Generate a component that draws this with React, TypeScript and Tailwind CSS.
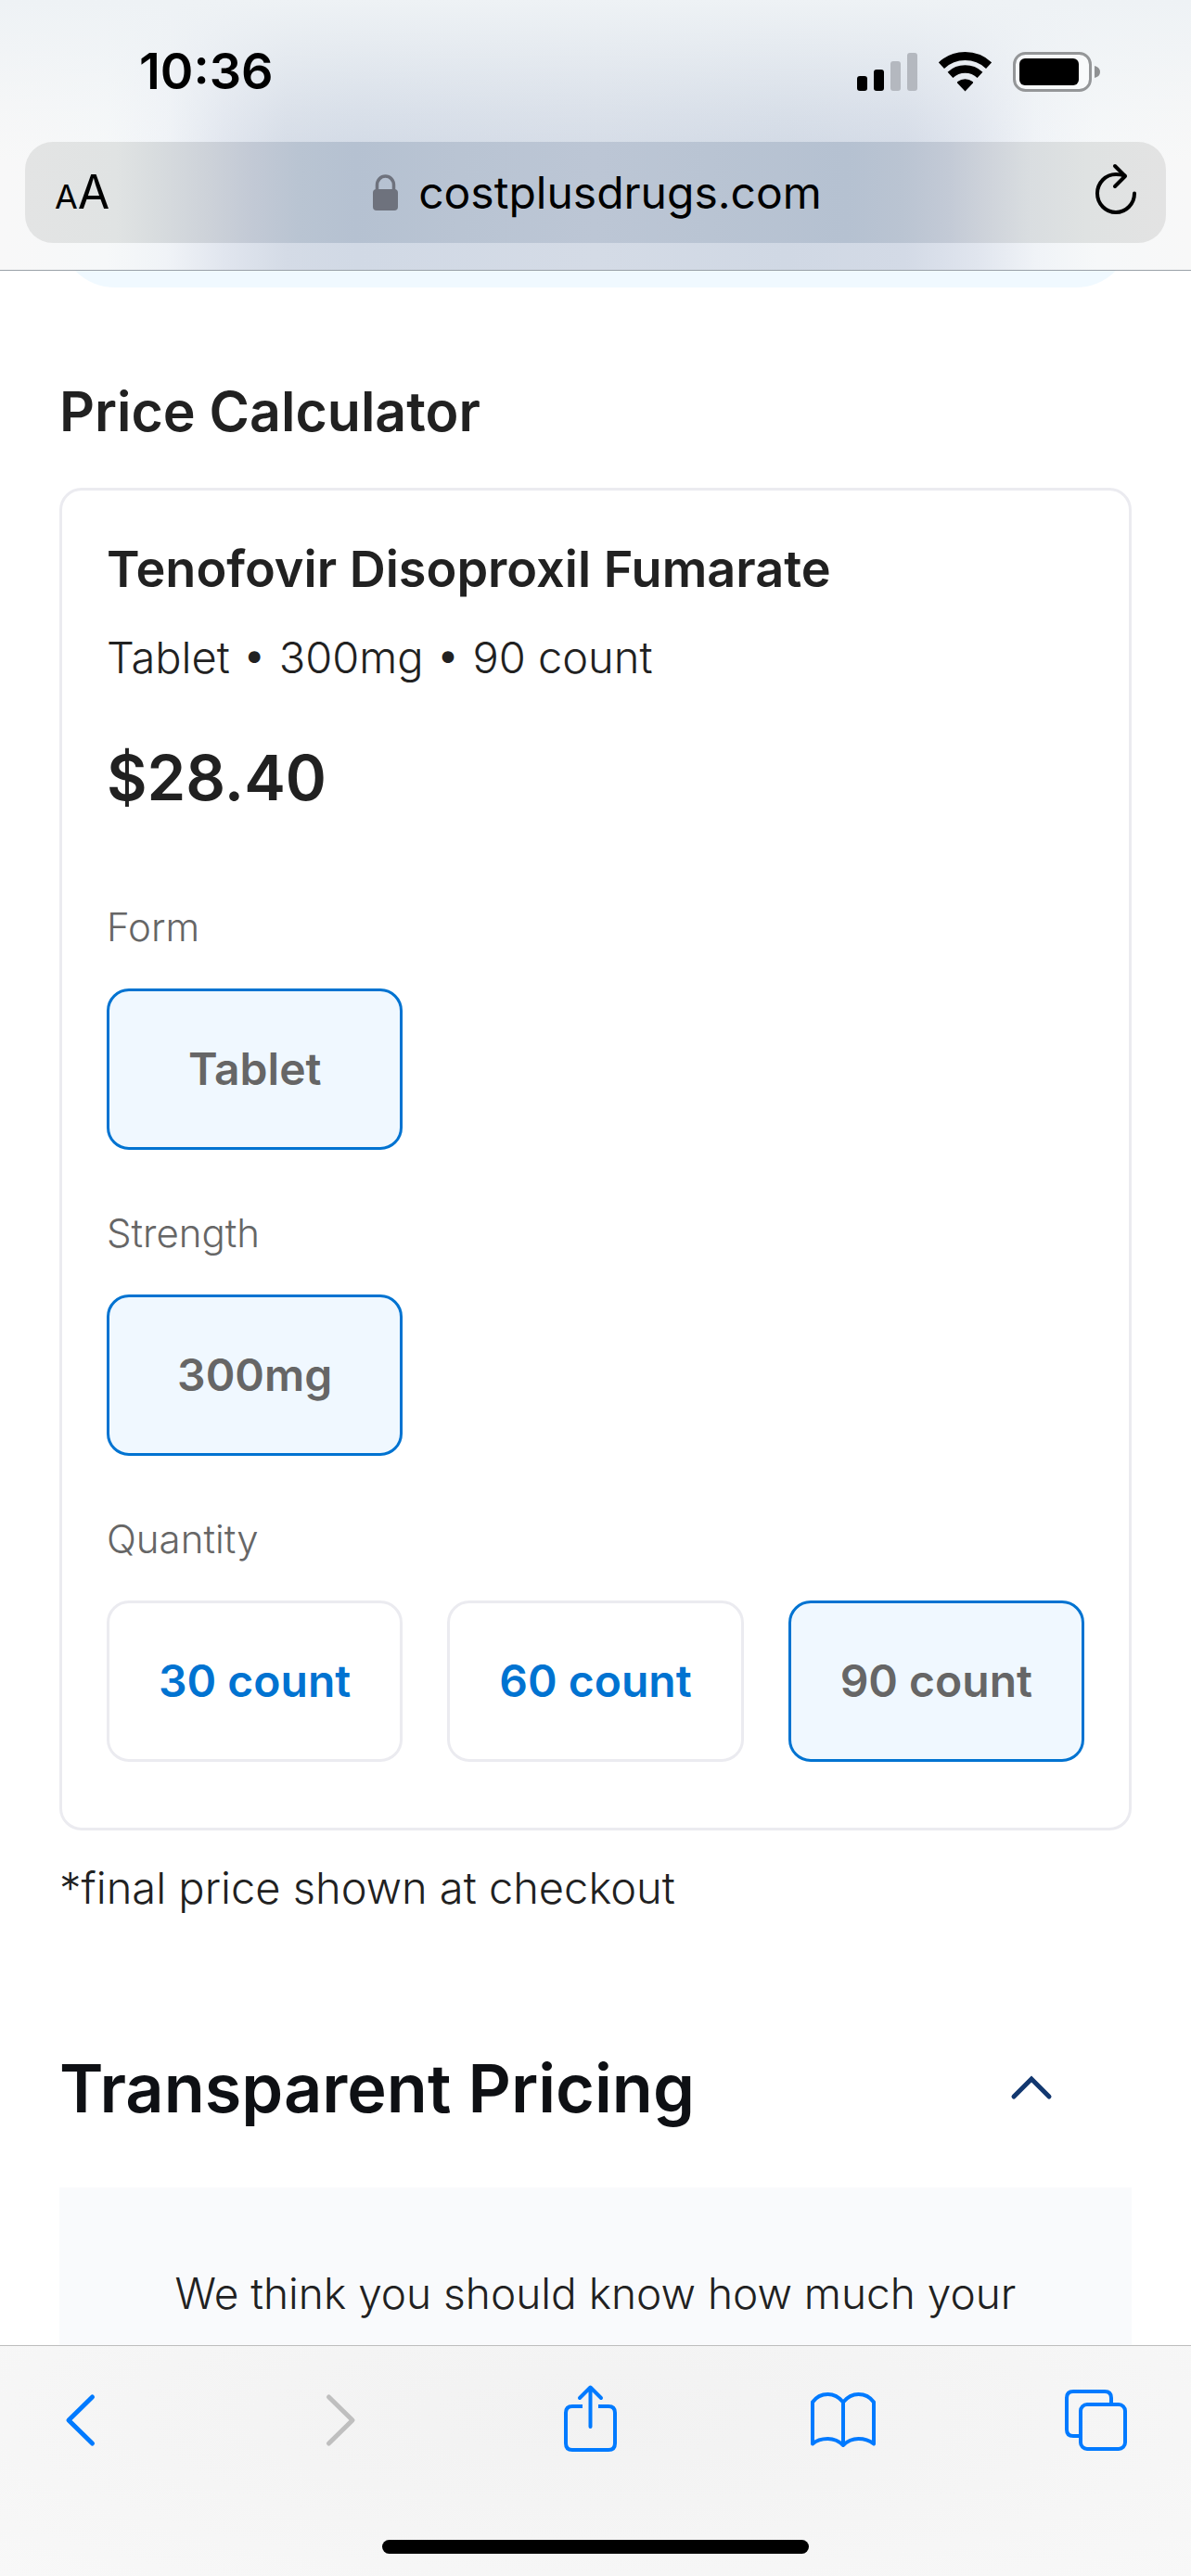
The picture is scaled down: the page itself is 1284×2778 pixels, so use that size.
import { useState } from "react";

const optionGroups = [
  { id: "form", label: "Form", options: ["Tablet"] },
  { id: "strength", label: "Strength", options: ["300mg"] },
  { id: "quantity", label: "Quantity", options: ["30 count", "60 count", "90 count"] },
];

const prices: Record<string, string> = {
  "30 count": "$13.80",
  "60 count": "$21.10",
  "90 count": "$28.40",
};

function StatusBar() {
  return (
    <div className="flex items-center justify-between pt-[44px] pl-[150px] pr-[97px]">
      <span className="text-[54px] leading-[66px] font-semibold">10:36</span>
      <div className="flex items-center gap-[23px]">
        <svg className="w-[65px] h-[43px]" viewBox="0 0 65 43" aria-label="Signal">
          <rect x="0" y="26" width="11" height="16" rx="3" />
          <rect x="18" y="19" width="11" height="23" rx="3" />
          <rect x="36" y="10" width="11" height="32" rx="3" fill="#b4b8bf" />
          <rect x="54" y="1" width="11" height="41" rx="3" fill="#b4b8bf" />
        </svg>
        <svg className="w-[57px] h-[43px]" viewBox="0 0 57 43" aria-label="Wi-Fi">
          <g fill="none" stroke="#000">
            <path d="M2.9 14.6A37.5 37.5 0 0 1 54.1 14.6" strokeWidth="9" />
            <path d="M12.5 24.8A23.5 23.5 0 0 1 44.5 24.8" strokeWidth="8.5" />
          </g>
          <path d="M28.5 42.4L20 33.4Q19.6 32.6 20.4 32A13 13 0 0 1 36.6 32Q37.4 32.6 37 33.4Z" />
        </svg>
        <svg className="w-[95px] h-[43px]" viewBox="0 0 95 43" aria-label="Battery">
          <rect x="1.5" y="1.5" width="82" height="40" rx="12" fill="#fff" fillOpacity="0.5" stroke="#949698" strokeWidth="3" />
          <rect x="7" y="7" width="64" height="29" rx="6" />
          <path d="M88 15Q94 16.500 94 21.500T88 28Z" fill="#8f9193" />
        </svg>
      </div>
    </div>
  );
}

function AddressBar() {
  return (
    <div className="mx-[27px] mt-[43px] mb-[29px] h-[109px] px-8 rounded-[30px] flex items-center justify-between bg-[linear-gradient(90deg,#e3e4e4_0%,#e0e3e3_8%,#d9dddf_11%,#cdd2d9_16%,#c2c9d5_20%,#b9c4d2_24%,#b5c1d1_29%,#b9c4d3_38%,#bcc6d5_50%,#b9c4d3_60%,#b5c1d1_72%,#bac4d2_77%,#c3cad6_81%,#cdd2da_84%,#d9dde0_88%,#dfe2e2_93%,#e3e3e3_100%)]">
      <button className="w-[60px] pt-1 flex items-baseline text-[50px] leading-[60px]" aria-label="Page settings">
        <span className="text-[36px]">A</span>
        <span>A</span>
      </button>
      <button className="pl-1 flex items-center gap-[22px] text-[48px] leading-[60px]">
        <svg className="w-[27px] h-[40px]" viewBox="0 0 27 40" fill="#6e727d">
          <rect x="0" y="16" width="27" height="23" rx="4" />
          <path d="M4.500 18V11.500a9 9.500 0 0 1 18 0V18" fill="none" stroke="#6e727d" strokeWidth="3.500" />
        </svg>
        costplusdrugs.com
      </button>
      <button className="w-[60px] flex justify-end" aria-label="Reload">
        <svg className="w-[44px] h-[56px] mb-2" viewBox="0 0 44 56" fill="none" stroke="#000" strokeWidth="4" strokeLinecap="round" strokeLinejoin="round">
          <path d="M31.500 13.500Q27 12 22 12A20 20.500 0 1 0 42 32.500" />
          <path d="M21 3L32 14L21 25" />
        </svg>
      </button>
    </div>
  );
}

function BrowserHeader() {
  return (
    <header className="shrink-0 border-b border-[#9aa1a8] bg-[linear-gradient(180deg,#eef2f5_0%,#eef2f5aa_20%,#eef2f544_42%,#eef2f500_60%),linear-gradient(90deg,#f8f8f8_0%,#f6f8f9_9%,#f0f3f7_14%,#e0e5ee_19%,#d4dbe6_24%,#d1d9e5_30%,#d4dbe6_50%,#d0d8e4_66%,#d3dae6_76%,#e0e5ee_82%,#f0f3f7_87%,#f6f8f9_92%,#f8f8f8_100%)]">
      <StatusBar />
      <AddressBar />
    </header>
  );
}

function PriceCalculator() {
  const [selected, setSelected] = useState<Record<string, string>>({
    form: "Tablet",
    strength: "300mg",
    quantity: "90 count",
  });

  return (
    <section className="mt-[98px]">
      <h2 className="text-[59px] leading-[72px] font-semibold">Price Calculator</h2>
      <div className="mt-[46px] border-3 border-[#ebebf0] rounded-[24px] px-12 pt-[52px] pb-[71px]">
        <h3 className="text-[54px] leading-[66px] font-semibold">Tenofovir Disoproxil Fumarate</h3>
        <p className="mt-8 text-[47px] leading-[60px] font-light">
          {selected.form} • {selected.strength} • {selected.quantity}
        </p>
        <p className="mt-[52px] mb-[83px] text-[67px] leading-[96px] font-semibold">{prices[selected.quantity]}</p>

        <div className="flex flex-col gap-[60px]">
          {optionGroups.map((group) => (
            <div key={group.id} role="group" aria-labelledby={group.id}>
              <p id={group.id} className="text-[42px] leading-[60px] font-light text-[#666]">
                {group.label}
              </p>
              <div className="mt-9 grid grid-cols-3 gap-12">
                {group.options.map((option) => {
                  const active = selected[group.id] === option;
                  return (
                    <button
                      key={option}
                      aria-pressed={active}
                      onClick={() => setSelected({ ...selected, [group.id]: option })}
                      className={`h-[174px] border-3 rounded-[24px] text-[48px] leading-[60px] font-semibold ${
                        active ? "border-[#0073d1] bg-[#f0f8ff] text-[#666]" : "border-[#ebebf0] bg-white text-[#0073d1]"
                      }`}
                    >
                      {option}
                    </button>
                  );
                })}
              </div>
            </div>
          ))}
        </div>
      </div>
      <p className="mt-[26px] text-[47px] leading-[72px] font-light">*final price shown at checkout</p>
    </section>
  );
}

function TransparentPricing() {
  const [open, setOpen] = useState(true);

  return (
    <section className="mt-[132px]">
      <div className="flex items-center justify-between pr-[84px]">
        <h2 className="text-[72px] leading-[96px] font-semibold text-[#0e1014]">Transparent Pricing</h2>
        <button aria-label="Toggle transparent pricing" aria-expanded={open} onClick={() => setOpen(!open)}>
          <svg className="w-[48px] h-[30px]" viewBox="0 0 48 30" fill="none" stroke="#12376f" strokeWidth="5" strokeLinecap="round">
            <path d="M5 24L24 5L43 24" />
          </svg>
        </button>
      </div>
      {open && (
        <div className="mt-[59px] bg-[#f9fafc] px-[100px] pt-[78px] pb-24 text-center">
          <p className="text-[46px] leading-[72px] font-light">We think you should know how much your</p>
        </div>
      )}
    </section>
  );
}

function BrowserToolbar() {
  const icon = "w-[72px] h-[76px]";
  return (
    <footer className="shrink-0 border-t border-[#bdbdbd] bg-[radial-gradient(ellipse_at_50%_30%,#f2f2f2_0%,#f4f4f4_40%,#f8f8f8_100%)] pt-10 pb-6">
      <nav className="flex justify-between pl-[51px] pr-[66px] text-[#007aff]">
        <button aria-label="Back">
          <svg className={icon} viewBox="0 0 72 76" fill="none" stroke="currentColor" strokeWidth="5" strokeLinecap="round" strokeLinejoin="round">
            <path d="M48.500 15L23 40L48.500 65" />
          </svg>
        </button>
        <button aria-label="Forward" disabled className="text-[#bfbfbf]">
          <svg className={icon} viewBox="0 0 72 76" fill="none" stroke="currentColor" strokeWidth="5" strokeLinecap="round" strokeLinejoin="round">
            <path d="M29.500 15L55 40L29.500 65" />
          </svg>
        </button>
        <button aria-label="Share">
          <svg className={icon} viewBox="0 0 72 76" fill="none" stroke="currentColor" strokeWidth="4" strokeLinecap="round" strokeLinejoin="round">
            <path d="M29 25H18Q11 25 11 32V65Q11 72 18 72H57Q64 72 64 65V32Q64 25 57 25H46" strokeLinecap="butt" />
            <path d="M37.500 47V5M26 16L37.500 4.500L49 16" />
          </svg>
        </button>
        <button aria-label="Bookmarks">
          <svg className={icon} viewBox="0 0 72 76" fill="none" stroke="currentColor" strokeWidth="4" strokeLinecap="round" strokeLinejoin="round">
            <path d="M37 67V20.500Q30 12 20.500 12Q10 12 4 20.500V65.500Q10 60 20.500 60Q30 60 37 67Q44 60 53.500 60Q63 60 70 65.500V20.500Q64 12 53.500 12Q44 12 37 20.500" />
          </svg>
        </button>
        <button aria-label="Tabs">
          <svg className={icon} viewBox="0 0 72 76" fill="none" stroke="currentColor" strokeWidth="4">
            <rect x="19" y="23" width="48" height="48" rx="7" />
            <path d="M19 57H11Q4 57 4 50V16Q4 9 11 9H45Q52 9 52 16V23" />
          </svg>
        </button>
      </nav>
      <div className="mt-[93px] mx-auto w-[460px] h-[15px] rounded-full bg-black" />
    </footer>
  );
}

export default function App() {
  return (
    <div className="h-screen flex flex-col bg-white text-black font-['Inter',sans-serif]">
      <BrowserHeader />
      <main className="flex-1 min-h-0 overflow-hidden px-16 text-[#212121]">
        {/* Tail of the banner scrolled under the header */}
        <div className="h-[18px] overflow-hidden flex flex-col justify-end">
          <div className="h-[120px] shrink-0 rounded-b-[60px] bg-[#f0f9ff]" />
        </div>
        <PriceCalculator />
        <TransparentPricing />
      </main>
      <BrowserToolbar />
    </div>
  );
}
